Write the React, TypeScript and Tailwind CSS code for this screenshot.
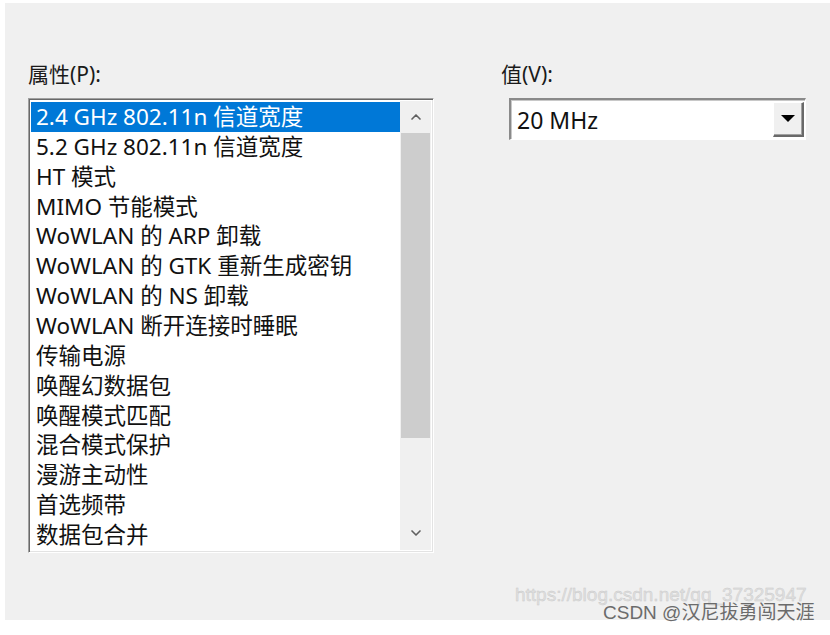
import { ChevronUp, ChevronDown } from 'lucide-react'

const items = [
  '2.4 GHz 802.11n 信道宽度',
  '5.2 GHz 802.11n 信道宽度',
  'HT 模式',
  'MIMO 节能模式',
  'WoWLAN 的 ARP 卸载',
  'WoWLAN 的 GTK 重新生成密钥',
  'WoWLAN 的 NS 卸载',
  'WoWLAN 断开连接时睡眠',
  '传输电源',
  '唤醒幻数据包',
  '唤醒模式匹配',
  '混合模式保护',
  '漫游主动性',
  '首选频带',
  '数据包合并',
]

const font = { fontFamily: '"Noto Sans", "Noto Sans CJK SC", sans-serif' }

export default function App() {
  return (
    <div className="relative w-[830px] h-[635px] bg-white overflow-hidden" style={font}>
      <div className="ml-[5px] mt-[3px] h-[617px] bg-[#f0f0f0] flex pl-[23px] pt-[57px]">
        {/* left column */}
        <div className="flex flex-col w-[406px]">
          <div className="h-[38px] text-[21px] text-[#1a1a1a] leading-[28px]">属性(P):</div>
          <div className="h-[455px] border-t border-l border-[#a0a0a0] border-b border-r border-b-white border-r-white shadow-[inset_1px_1px_0_#696969,inset_-1px_-1px_0_#e3e3e3] bg-white flex p-[2px]">
            <div className="flex-1 flex flex-col pt-[1px] overflow-hidden">
              {items.map((t, i) => (
                <div
                  key={t}
                  className={`h-[30px] leading-[29px] pl-[5px] text-[22.5px] whitespace-nowrap ${
                    i === 0 ? 'bg-[#0078d7] text-white' : 'text-[#111]'
                  }`}
                >
                  {t}
                </div>
              ))}
            </div>
            <div className="w-[31px] bg-[#f0f0f0] flex flex-col">
              <div className="h-[32px] flex items-center justify-center text-[#606060]">
                <ChevronUp size={16} strokeWidth={2.5} />
              </div>
              <div className="h-[305px] mx-[1px] bg-[#cdcdcd]" />
              <div className="flex-1" />
              <div className="h-[34px] flex items-center justify-center text-[#606060]">
                <ChevronDown size={16} strokeWidth={2.5} />
              </div>
            </div>
          </div>
        </div>

        {/* right column */}
        <div className="flex flex-col ml-[67px]">
          <div className="h-[38px] text-[21px] text-[#1a1a1a] leading-[28px]">值(V):</div>
          <div className="ml-[8px] w-[297px] h-[42px] border-t-2 border-l-2 border-[#8a8a8a] border-b border-r border-b-white border-r-white shadow-[inset_1px_1px_0_#c8c8c8] bg-white flex items-center">
            <div className="flex-1 pl-[6px] text-[23px] text-[#111] leading-none pt-[2px]">20 MHz</div>
            <div className="w-[31px] h-[35px] mr-[1px] bg-[#f0f0f0] border-t border-l border-white border-b-2 border-r-2 border-b-[#696969] border-r-[#696969] shadow-[inset_-1px_-1px_0_#a0a0a0] flex items-center justify-center">
              <svg width="14" height="8" viewBox="0 0 14 8">
                <path d="M0 0 L14 0 L7 7 Z" fill="#000" />
              </svg>
            </div>
          </div>
        </div>
      </div>

      {/* watermark */}
      <div
        className="absolute left-[515px] top-[585px] text-[19px] leading-none text-[#e0e0e0] whitespace-nowrap"
        style={{ fontFamily: '"Liberation Sans", Arial, sans-serif', WebkitTextStroke: '0.4px #c8c8c8' }}
      >
        https://blog.csdn.net/qq_37325947
      </div>
      <div
        className="absolute left-[603px] top-[603px] text-[19px] leading-none text-[#6b6b6b] whitespace-nowrap"
        style={{ fontFamily: '"Liberation Sans", "Noto Sans CJK SC", sans-serif' }}
      >
        CSDN @汉尼拔勇闯天涯
      </div>
    </div>
  )
}
